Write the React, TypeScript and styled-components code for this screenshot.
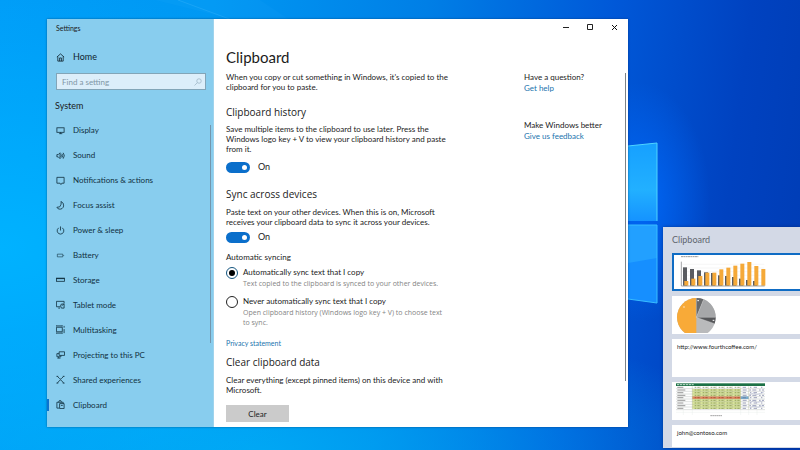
import React from 'react';
import styled, { createGlobalStyle, css } from 'styled-components';

const GlobalStyle = createGlobalStyle`
  *, *::before, *::after { box-sizing: border-box; }
  html, body, #root { height: 100%; }
  body { margin: 0; font-family: Lato, "Open Sans", sans-serif; color: #1b1b1b; }
  h1, h2, h3, p, ul { margin: 0; padding: 0; font-weight: 400; }
  ul { list-style: none; }
  button, input { font-family: inherit; }
  svg { display: block; }
`;

const Desktop = styled.div`
  position: relative;
  min-height: 100%;
  overflow: hidden;
  background:
    radial-gradient(ellipse 70px 120px at 80% 45%, #006dffcc, #0062f500),
    radial-gradient(ellipse 420px 260px at 0% 55%, #00b2ff, #00b0ff00),
    radial-gradient(ellipse 500px 140px at 32% 100%, #00aef6cc, #00aaf500),
    linear-gradient(97deg, #009df8 0%, #0098f3 25%, #007fe6 50%, #0058d8 72%, #0042c0 88%, #003cb4 100%);
`;

const Wallpaper = styled.svg`
  position: absolute;
  left: 628px;
  top: 140px;
`;

const Beam = styled.svg`
  position: absolute;
  left: 0;
  top: 0;
`;

const SettingsWindow = styled.div`
  position: absolute;
  top: 19px;
  left: 47px;
  right: 172px;
  display: flex;
  background: #fff;
  box-shadow: 0 0 2px #00204888;
`;

const Sidebar = styled.aside`
  display: flex;
  flex: none;
  flex-direction: column;
  width: 167px;
  padding: 0 0 10px;
  background: #88cdee;
  border-right: 1px solid #9fd3ec;
`;

const AppName = styled.div`
  padding: 4px 9px 0;
  font-size: 7px;
  line-height: 10px;
`;

const iconRow = css`
  display: flex;
  align-items: center;
  gap: 8px;
  padding: 0 9px;
  font-size: 8px;
  line-height: 12px;
  color: #10303f;
  text-decoration: none;
`;

const HomeLink = styled.a`
  ${iconRow}
  margin-top: 18px;
  color: #10242f;
  font-size: 9px;
`;

const Search = styled.label`
  display: flex;
  align-items: center;
  height: 17px;
  margin: 10px 7px 0 9px;
  padding: 0 3px 0 5px;
  background: #dceefa;
  border: 1px solid #82a5b8;
`;

const SearchInput = styled.input`
  flex: 1;
  min-width: 0;
  padding: 0;
  border: 0;
  outline: 0;
  background: transparent;
  font-size: 8px;
  line-height: 12px;
  &::placeholder { color: #8197a6; opacity: 1; }
`;

const GroupTitle = styled.h2`
  margin: 9px 0 0 8px;
  font-size: 9px;
  line-height: 14px;
`;

const NavArea = styled.div`
  display: flex;
  flex: 1;
  margin-top: 5px;
`;

const NavList = styled.ul`
  display: grid;
  flex: 1;
  grid-auto-rows: 1fr;
`;

const NavLink = styled.a<{ $active?: boolean }>`
  ${iconRow}
  position: relative;
  height: 100%;
  &::before {
    content: '';
    position: absolute;
    left: 0;
    width: 2px;
    height: 12px;
    background: ${p => (p.$active ? '#0a72d0' : 'transparent')};
  }
`;

const Scrollbar = styled.span<{ $top?: number; $bottom?: number; $tone: string }>`
  flex: none;
  width: 1px;
  margin: ${p => p.$top ?? 0}px 2px ${p => p.$bottom ?? 0}px 0;
  background: ${p => p.$tone};
`;

const Main = styled.main`
  display: flex;
  flex: 1;
  flex-direction: column;
  min-width: 0;
`;

const TitleBar = styled.div`
  display: flex;
  justify-content: flex-end;
  gap: 8px;
  height: 17px;
  padding-right: 6px;
`;

const CaptionButton = styled.button`
  display: grid;
  place-items: center;
  width: 16px;
  padding: 0;
  border: 0;
  background: transparent;
`;

const PageTitle = styled.h1`
  margin: 9px 12px 0;
  font-size: 15px;
  line-height: 24px;
`;

const Columns = styled.div`
  display: flex;
  flex: 1;
  padding: 3px 0 5px 12px;
`;

const Article = styled.div`
  flex: 1;
  min-width: 0;
`;

const Help = styled.aside`
  flex: none;
  width: 101px;
`;

const HelpGroup = styled.div`
  margin-bottom: 26px;
  font-size: 8px;
  line-height: 11px;
`;

const Link = styled.a`
  display: block;
  color: #2174ae;
  text-decoration: none;
`;

const PrivacyLink = styled(Link)`
  width: fit-content;
  margin-top: 10px;
  font-size: 7px;
  line-height: 10px;
`;

const Heading = styled.h2<{ $gap: number }>`
  margin-top: ${p => p.$gap}px;
  font-family: "Open Sans", sans-serif;
  font-size: 10px;
  line-height: 14px;
`;

const Text = styled.p<{ $gap?: number }>`
  width: 224px;
  margin-top: ${p => p.$gap ?? 0}px;
  font-size: 8px;
  line-height: 10px;
`;

const ToggleRow = styled.label<{ $gap: number }>`
  display: flex;
  align-items: center;
  gap: 8px;
  width: fit-content;
  height: 12px;
  margin-top: ${p => p.$gap}px;
  font-size: 9px;
  line-height: 12px;
`;

const Toggle = styled.input`
  appearance: none;
  display: flex;
  align-items: center;
  width: 24px;
  height: 11px;
  margin: 0;
  padding: 0 3px;
  border-radius: 6px;
  background: #8a8a8a;
  &::before {
    content: '';
    width: 5px;
    height: 5px;
    border-radius: 50%;
    background: #fff;
  }
  &:checked { justify-content: flex-end; background: #0b6fcb; }
`;

const Choices = styled.div`
  display: grid;
  gap: 7px;
  margin-top: 5px;
`;

const Choice = styled.label`
  display: grid;
  grid-template-columns: 12px 1fr;
  column-gap: 5px;
  font-size: 8px;
  line-height: 11px;
`;

const Radio = styled.input`
  appearance: none;
  display: grid;
  place-items: center;
  width: 12px;
  height: 12px;
  margin: 0;
  border: 1px solid #222;
  border-radius: 50%;
  &:checked { border-color: #14557f; }
  &:checked::before {
    content: '';
    width: 6px;
    height: 6px;
    border-radius: 50%;
    background: #000;
  }
`;

const Hint = styled.span`
  grid-column: 2;
  width: 205px;
  font-family: "Open Sans", sans-serif;
  font-size: 7px;
  line-height: 10px;
  color: #858585;
`;

const ClearButton = styled.button`
  display: block;
  width: 63px;
  height: 17px;
  margin-top: 10px;
  padding: 0;
  border: 0;
  background: #cbcbcb;
  font-size: 8px;
  color: #222;
`;

const Flyout = styled.section`
  position: absolute;
  top: 227px;
  right: 0;
  width: 137px;
  padding: 6px 0 1px 9px;
  background: #d3d9e6;
  box-shadow: 0 0 3px #00206088;
`;

const FlyoutTitle = styled.h2`
  font-size: 9px;
  line-height: 14px;
  color: #60656e;
`;

const CardList = styled.ul`
  display: grid;
  gap: 5px;
  margin-top: 6px;
`;

const Card = styled.li<{ $selected?: boolean; $height?: number }>`
  height: ${p => p.$height ?? 38}px;
  overflow: hidden;
  padding: ${p => (p.$selected ? '0 5px' : '1px 4px')};
  border: ${p => (p.$selected ? '2px solid #0f6cc4' : '0')};
  border-right: 0;
  background: #fff;
`;

const CardText = styled.p`
  padding: 2px 1px;
  font-size: 6px;
  line-height: 10px;
  color: #222;
`;

const Icon = ({ children, size = 9 }: { children: React.ReactNode; size?: number }) => (
  <svg width={size} height={size} viewBox="0 0 20 20" fill="none" stroke="currentColor" strokeWidth="1.8" aria-hidden="true">
    {children}
  </svg>
);

const navItems: { label: string; icon: React.ReactNode }[] = [
  { label: 'Display', icon: <><rect x="2" y="4" width="16" height="10" /><path d="M7 17h7M10 14v3" /></> },
  { label: 'Sound', icon: <path d="M2 8v5h3l4 4V4L5 8zM11 8q2 2 0 5M13 6q4 4 0 9M16 4q5 6 0 13" /> },
  { label: 'Notifications & actions', icon: <path d="M2 3h16v13h-5l-2 3-2-3H2z" /> },
  { label: 'Focus assist', icon: <path d="M11 1q7 3 6 10-2 8-10 7-4-1-5-4 8 1 9-6 1-4 0-7z" /> },
  { label: 'Power & sleep', icon: <path d="M10 1v9M6 4q-5 4-3 9 2 5 7 5t7-5q2-5-3-9" /> },
  { label: 'Battery', icon: <path d="M3 7h12v6H3zM17 9v2" strokeWidth="1.3" /> },
  { label: 'Storage', icon: <><rect x="1" y="7" width="18" height="7" /><path d="M1 8h18" strokeWidth="2.2" /></> },
  { label: 'Tablet mode', icon: <path d="M9 15H1V3h17v5M5 18h4M12 18h6V9h-6l-2 4 2 5zM13 13l4-4" /> },
  { label: 'Multitasking', icon: <path d="M1 5h13v10H1zM1 1v2M14 1v2M1 2h13M1 18h13M1 17v2M14 17v2M18 2v4M18 9v9" /> },
  { label: 'Projecting to this PC', icon: <path d="M7 4h12v8H7zM11 12v3H2V8h5M3 18h7M6 15v3" /> },
  { label: 'Shared experiences', icon: <path d="M3 3l5 5q2 2 4 0l5-5M3 18l5-6q2-2 4 0l5 6M1 3h4M15 3h4M1 18h4M15 18h4" /> },
  { label: 'Clipboard', icon: <path d="M7 18H2V5h14v3M6 5q0-4 3-4t3 4M8 8h10v11H8zM11 12h4" /> },
];

const grayBars = [124, 129, 133, 139, 141, 148, 150, 153, 158, 162, 165];
const orangeBars = [165, 158, 150, 140, 140, 130, 125, 119, 113, 108, 120, 129];

const BarChart = () => (
  <svg width="88" height="34" viewBox="72 87 264 102" role="img" aria-label="Bar chart">
    <path d="M78 92h52" stroke="#999" strokeWidth="3" strokeDasharray="6 1" />
    <path d="M82 115h246M82 126h246M82 137h246M82 148h246M82 159h246M82 170h246" stroke="#e4e4e4" />
    {grayBars.map((y, i) => <rect key={i} x={84 + i * 21} y={y} width="12" height={179 - y} fill="#595b60" />)}
    {orangeBars.map((y, i) => <rect key={i} x={88 + i * 21} y={y} width="12" height={179 - y} fill="#f5a938" />)}
    <path d="M79 107v73h250" fill="none" stroke="#77797c" strokeWidth="2" />
  </svg>
);

const PieChart = () => (
  <svg width="42" height="36" viewBox="0 0 126 108" role="img" aria-label="Pie chart">
    <circle cx="61" cy="61" r="58" fill="#b9babc" />
    <path d="M61 61V3a58 58 0 0 0 0 116z" fill="#f8aa38" />
    <path d="M61 61V3a58 58 0 0 1 22 4z" fill="#68696b" />
    <path d="M61 61L83 7a58 58 0 0 1 36 54z" fill="#a6a7a9" />
    <path d="M61 61h58a58 58 0 0 1-3 19z" fill="#56575a" />
    <path d="M61 61V3M61 61L83 7M61 61h58M61 61l55 19" stroke="#ddd" />
    <path d="M64 11h5M110 70h5M22 30h4" stroke="#fff" strokeWidth="3" />
  </svg>
);

const SheetThumb = () => (
  <svg width="89" height="34" viewBox="0 0 267 102" role="img" aria-label="Spreadsheet">
    <rect width="267" height="8" y="1" fill="#1d7146" />
    <path d="M3 5h50" stroke="#c7dfd1" strokeWidth="3" strokeDasharray="7 2" />
    <rect x="49" y="18" width="145" height="60" fill="#dce79a" />
    <rect x="49" y="40" width="145" height="8" fill="#e98b5c" />
    <rect x="194" y="40" width="24" height="8" fill="#74acd3" />
    {[13, 21, 29, 37, 44, 52, 60, 68, 76].map((y, row) => (
      <g key={y}>
        <path d={`M0 ${y + 4}h267`} stroke="#9aa5a0" strokeWidth="1" />
        <path d={`M4 ${y}h${row % 2 ? 24 : 18}`} stroke="#666" strokeWidth="2" />
        <path d={`M56 ${y}h138`} stroke={row === 4 ? '#8f3626' : '#718048'} strokeWidth="2" strokeDasharray="5 3 7 9" />
        <path d={`M200 ${y}h64`} stroke="#6d7398" strokeWidth="2" strokeDasharray={row % 2 ? '12 8 5 4' : '10 12 4 7'} />
      </g>
    ))}
    <path d="M49 10v69M73 10v69M97 10v69M121 10v69M145 10v69M169 10v69M194 10v69M218 10v69" stroke="#a6aa82" />
    <path d="M220 36l12-6 10 5 22-8M220 60l14-7 10 6 18-6M222 74l12-5 12 4 16-6" fill="none" stroke="#8a90c0" />
    <path d="M0 88h267M22 80v16M49 80v16M194 80v16M218 80v16M243 80v16" stroke="#e1e6e3" />
    <path d="M103 98h35" stroke="#777" strokeWidth="2" strokeDasharray="5 1" />
  </svg>
);

export default function App() {
  return (
    <>
      <GlobalStyle />
      <Desktop>
        <Beam width="300" height="20" aria-hidden="true">
          <path d="M155 0H260L290 20H235z" fill="#33b4ff" opacity=".08" />
          <path d="M178 0L232 20" stroke="#54c1ff" opacity=".25" />
        </Beam>
        <Wallpaper width="34" height="170" aria-hidden="true">
          <defs>
            <linearGradient id="pane" x1="0" y1="0" x2="0" y2="1">
              <stop offset="0" stopColor="#16a0ff" />
              <stop offset=".6" stopColor="#22b0ff" />
              <stop offset="1" stopColor="#1593ff" />
            </linearGradient>
          </defs>
          <path d="M0 6L29 3V81H0z" fill="url(#pane)" />
          <path d="M0 6L29 3V81" fill="none" stroke="#4fd4ff" />
          <path d="M0 85H29V163L0 159z" fill="#168fff" />
          <path d="M0 85H29V118L0 123z" fill="#22a0ff" />
          <path d="M0 85H29V163L0 159" fill="none" stroke="#39bdff" />
        </Wallpaper>

        <SettingsWindow>
          <Sidebar>
            <AppName>Settings</AppName>
            <HomeLink href="#home">
              <Icon><path d="M2 9l8-7 8 7M4 8v10h12V8M8 18v-7h4v7" /></Icon>
              Home
            </HomeLink>
            <Search>
              <SearchInput type="text" placeholder="Find a setting" aria-label="Find a setting" />
              <svg width="8" height="8" viewBox="0 0 16 16" fill="none" stroke="#9db6c6" strokeWidth="1.5" aria-hidden="true">
                <circle cx="10" cy="6" r="4.5" /><path d="M7 9l-6 6" />
              </svg>
            </Search>
            <GroupTitle>System</GroupTitle>
            <NavArea>
              <NavList>
                {navItems.map(item => (
                  <li key={item.label}>
                    <NavLink href="#" $active={item.label === 'Clipboard'}>
                      <Icon>{item.icon}</Icon>
                      {item.label}
                    </NavLink>
                  </li>
                ))}
              </NavList>
              <Scrollbar $top={7} $bottom={74} $tone="#7496ad" />
            </NavArea>
          </Sidebar>

          <Main>
            <TitleBar>
              <CaptionButton aria-label="Minimize">
                <svg width="7" height="7" stroke="#222"><path d="M0 3.5h6" /></svg>
              </CaptionButton>
              <CaptionButton aria-label="Maximize">
                <svg width="7" height="7" fill="none" stroke="#222"><path d="M.5.5h5v5h-5z" /></svg>
              </CaptionButton>
              <CaptionButton aria-label="Close">
                <svg width="7" height="7" stroke="#111"><path d="M1 1l5 5M6 1L1 6" /></svg>
              </CaptionButton>
            </TitleBar>
            <PageTitle>Clipboard</PageTitle>
            <Columns>
              <Article>
                <Text>When you copy or cut something in Windows, it's copied to the clipboard for you to paste.</Text>
                <Heading $gap={13}>Clipboard history</Heading>
                <Text $gap={5}>
                  Save multiple items to the clipboard to use later. Press the Windows logo key + V to view your clipboard
                  history and paste from it.
                </Text>
                <ToggleRow $gap={7}><Toggle type="checkbox" defaultChecked />On</ToggleRow>
                <Heading $gap={14}>Sync across devices</Heading>
                <Text $gap={6}>
                  Paste text on your other devices. When this is on, Microsoft receives your clipboard data to sync it
                  across your devices.
                </Text>
                <ToggleRow $gap={4}><Toggle type="checkbox" defaultChecked />On</ToggleRow>
                <Text as="h3" $gap={9}>Automatic syncing</Text>
                <Choices role="radiogroup" aria-label="Automatic syncing">
                  <Choice>
                    <Radio type="radio" name="sync" defaultChecked />
                    Automatically sync text that I copy
                    <Hint>Text copied to the clipboard is synced to your other devices.</Hint>
                  </Choice>
                  <Choice>
                    <Radio type="radio" name="sync" />
                    Never automatically sync text that I copy
                    <Hint>Open clipboard history (Windows logo key + V) to choose text to sync.</Hint>
                  </Choice>
                </Choices>
                <PrivacyLink href="#privacy">Privacy statement</PrivacyLink>
                <Heading $gap={7}>Clear clipboard data</Heading>
                <Text $gap={6}>Clear everything (except pinned items) on this device and with Microsoft.</Text>
                <ClearButton>Clear</ClearButton>
              </Article>
              <Help>
                <HelpGroup>
                  <p>Have a question?</p>
                  <Link href="#help">Get help</Link>
                </HelpGroup>
                <HelpGroup>
                  <p>Make Windows better</p>
                  <Link href="#feedback">Give us feedback</Link>
                </HelpGroup>
              </Help>
              <Scrollbar $top={1} $bottom={41} $tone="#7c8286" />
            </Columns>
          </Main>
        </SettingsWindow>

        <Flyout>
          <FlyoutTitle>Clipboard</FlyoutTitle>
          <CardList>
            <Card $selected><BarChart /></Card>
            <Card><PieChart /></Card>
            <Card><CardText>http://www.fourthcoffee.com/</CardText></Card>
            <Card><SheetThumb /></Card>
            <Card $height={22}><CardText>john@contoso.com</CardText></Card>
          </CardList>
        </Flyout>
      </Desktop>
    </>
  );
}
